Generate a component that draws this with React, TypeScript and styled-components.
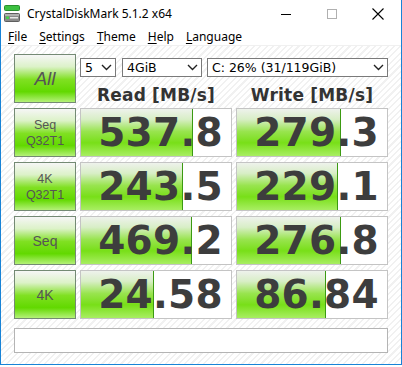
import { FC } from "react";
import styled, { createGlobalStyle } from "styled-components";

const GlobalStyle = createGlobalStyle`
  html, body {
    margin: 0;
    padding: 0;
    background: #fff;
  }
  body {
    font-family: "DejaVu Sans", Verdana, sans-serif;
  }
`;

const Window = styled.div`
  width: 402px;
  height: 365px;
  box-sizing: border-box;
  border: 1px solid #1883d7;
  border-top: none;
  display: flex;
  flex-direction: column;
  background: #fff;
  overflow: hidden;
`;

const TitleBar = styled.div`
  height: 27px;
  display: flex;
  align-items: center;
  padding-left: 3px;
  .title {
    margin-left: 7px;
    font-family: "Noto Sans", "Open Sans", sans-serif;
    font-size: 12px;
    color: #000;
  }
  .spacer {
    flex: 1;
  }
`;

const Control = styled.div`
  width: 46px;
  height: 27px;
  display: flex;
  align-items: center;
  justify-content: center;
`;

const MenuBar = styled.div`
  height: 18px;
  display: flex;
  align-items: center;
  padding-left: 1px;
  border-bottom: 1px solid #f0f0f0;
`;

const MenuItem = styled.span`
  padding: 0 6px;
  font-family: "Noto Sans", "Open Sans", sans-serif;
  font-size: 12px;
  color: #000;
  u {
    text-decoration: underline;
    text-underline-offset: 2px;
  }
`;

const Board = styled.div`
  flex: 1;
  background: repeating-linear-gradient(
    135deg,
    #ffffff 0px,
    #ffffff 3px,
    #f1f1f1 3px,
    #f1f1f1 4.5px
  );
  padding: 8px 0 0 13px;
  display: grid;
  grid-template-columns: 62px 152px 152px;
  grid-template-rows: repeat(5, 49px) 29px;
  column-gap: 4px;
  row-gap: 5px;
  align-content: start;
`;

type LabelSize = "small" | "mid" | "big";

const labelFont: Record<LabelSize, string> = {
  small: "12.5px",
  mid: "14px",
  big: "19px",
};

const TestButton = styled.div<{ $size: LabelSize; $italic?: boolean }>`
  box-sizing: border-box;
  border: 1px solid #748a74;
  background: linear-gradient(
    to bottom,
    #f6f6f6 0%,
    #dcf2c8 25%,
    #80e022 52%,
    #62d900 78%,
    #b4f178 100%
  );
  display: flex;
  flex-direction: column;
  align-items: center;
  justify-content: center;
  font-family: "Liberation Sans", Arial, sans-serif;
  font-size: ${(p) => labelFont[p.$size]};
  font-style: ${(p) => (p.$italic ? "italic" : "normal")};
  line-height: ${(p) => (p.$size === "big" ? "20px" : "16px")};
  color: #555;
`;

const TopPanel = styled.div`
  grid-column: 2 / 4;
  display: flex;
  flex-direction: column;
`;

const SelectRow = styled.div`
  margin-top: 4px;
  height: 19px;
  display: flex;
`;

const Select = styled.div<{ $w: number; $gap?: number }>`
  box-sizing: border-box;
  width: ${(p) => p.$w}px;
  margin-right: ${(p) => p.$gap ?? 0}px;
  height: 19px;
  border: 1px solid #7a7a7a;
  background: #fff;
  display: flex;
  align-items: center;
  justify-content: space-between;
  padding: 0 3px 0 4px;
  font-family: "DejaVu Sans", Verdana, sans-serif;
  font-size: 12.5px;
  color: #000;
`;

const Headers = styled.div`
  display: grid;
  grid-template-columns: 152px 152px;
  column-gap: 4px;
  margin-top: 8px;
`;

const Header = styled.div`
  text-align: center;
  font-family: "DejaVu Sans", Verdana, sans-serif;
  font-weight: bold;
  font-size: 17px;
  color: #333;
  letter-spacing: 0.2px;
`;

const Cell = styled.div`
  position: relative;
  box-sizing: border-box;
  border: 1px solid #c4c4c4;
  background: #fff;
  overflow: hidden;
`;

const Fill = styled.div`
  position: absolute;
  left: 0;
  top: 0;
  bottom: 0;
  border-right: 1px solid #3b9a12;
  background: linear-gradient(
    to bottom,
    #eef2ec 0%,
    #d8eec6 22%,
    #98e44e 48%,
    #78df18 72%,
    #a8ee62 100%
  );
`;

const Value = styled.div`
  position: relative;
  height: 100%;
  display: flex;
  align-items: center;
  justify-content: flex-end;
  padding-right: 8px;
  font-family: "DejaVu Sans", Verdana, sans-serif;
  font-weight: bold;
  font-size: 39px;
  color: #3d3d3d;
  letter-spacing: 0.3px;
`;

const Comment = styled.div`
  grid-column: 1 / 4;
  margin-top: 4px;
  box-sizing: border-box;
  border: 1px solid #b4b4b4;
  background: #fff;
`;

const Chevron: FC = () => (
  <svg width="11" height="7" viewBox="0 0 11 7">
    <path d="M1 1 L5.5 5.5 L10 1" fill="none" stroke="#222" strokeWidth="1.4" />
  </svg>
);

const AppIcon: FC = () => (
  <svg width="16" height="17" viewBox="0 0 16 17">
    <rect x="0.5" y="0.5" width="15" height="5" rx="1" fill="#3cc040" stroke="#2a8f2e" />
    <rect x="0.5" y="8.5" width="15" height="8" rx="1" fill="#8a8a8a" stroke="#5e5e5e" />
    <rect x="1" y="9" width="14" height="2" fill="#b0b0b0" />
    <rect x="6" y="12" width="8" height="1.5" fill="#e8e8e8" />
    <rect x="2" y="11.5" width="3" height="2.5" fill="#46d24a" />
  </svg>
);

interface Result {
  label: string[];
  size: LabelSize;
  read: string;
  readFill: number;
  write: string;
  writeFill: number;
}

const results: Result[] = [
  { label: ["Seq", "Q32T1"], size: "small", read: "537.8", readFill: 111, write: "279.3", writeFill: 103 },
  { label: ["4K", "Q32T1"], size: "small", read: "243.5", readFill: 101, write: "229.1", writeFill: 100 },
  { label: ["Seq"], size: "mid", read: "469.2", readFill: 110, write: "276.8", writeFill: 103 },
  { label: ["4K"], size: "mid", read: "24.58", readFill: 72, write: "86.84", writeFill: 88 },
];

const ResultRow: FC<{ result: Result }> = ({ result }) => (
  <>
    <TestButton $size={result.size}>
      {result.label.map((l) => (
        <span key={l}>{l}</span>
      ))}
    </TestButton>
    <Cell>
      <Fill style={{ width: result.readFill }} />
      <Value>{result.read}</Value>
    </Cell>
    <Cell>
      <Fill style={{ width: result.writeFill }} />
      <Value>{result.write}</Value>
    </Cell>
  </>
);

const App: FC = () => {
  return (
    <>
      <GlobalStyle />
      <Window>
        <TitleBar>
          <AppIcon />
          <span className="title">CrystalDiskMark 5.1.2 x64</span>
          <span className="spacer" />
          <Control>
            <svg width="10" height="10" viewBox="0 0 10 10">
              <path d="M0 5.5 H10" stroke="#000" strokeWidth="1" />
            </svg>
          </Control>
          <Control>
            <svg width="10" height="10" viewBox="0 0 10 10">
              <rect x="0.5" y="0.5" width="9" height="9" fill="none" stroke="#b0b0b0" />
            </svg>
          </Control>
          <Control>
            <svg width="12" height="12" viewBox="0 0 12 12">
              <path d="M0.5 0.5 L11.5 11.5 M11.5 0.5 L0.5 11.5" stroke="#000" strokeWidth="1.1" />
            </svg>
          </Control>
        </TitleBar>
        <MenuBar>
          <MenuItem><u>F</u>ile</MenuItem>
          <MenuItem><u>S</u>ettings</MenuItem>
          <MenuItem><u>T</u>heme</MenuItem>
          <MenuItem><u>H</u>elp</MenuItem>
          <MenuItem><u>L</u>anguage</MenuItem>
        </MenuBar>
        <Board>
          <TestButton $size="big" $italic>All</TestButton>
          <TopPanel>
            <SelectRow>
              <Select $w={36} $gap={6}>
                <span>5</span>
                <Chevron />
              </Select>
              <Select $w={80} $gap={5}>
                <span>4GiB</span>
                <Chevron />
              </Select>
              <Select $w={181}>
                <span>C: 26% (31/119GiB)</span>
                <Chevron />
              </Select>
            </SelectRow>
            <Headers>
              <Header>Read [MB/s]</Header>
              <Header>Write [MB/s]</Header>
            </Headers>
          </TopPanel>
          {results.map((result, index) => (
            <ResultRow key={index} result={result} />
          ))}
          <Comment />
        </Board>
      </Window>
    </>
  );
};

export default App;
